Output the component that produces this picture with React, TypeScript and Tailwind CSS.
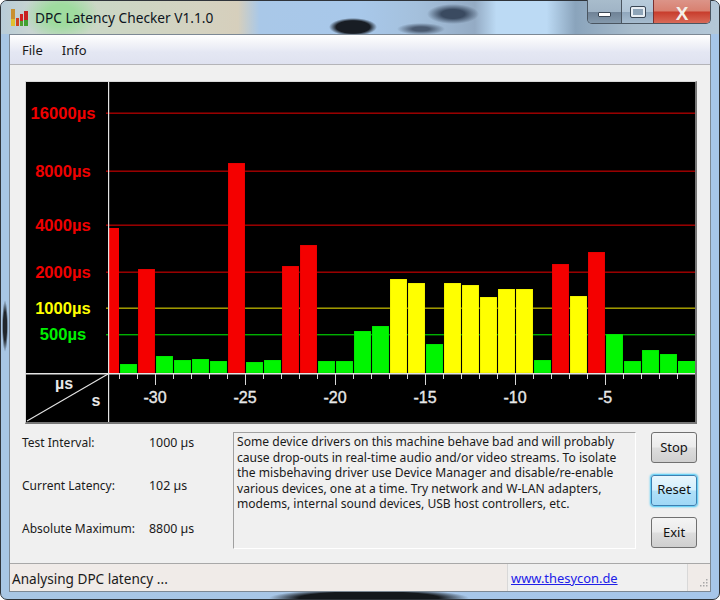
const bars: [number, number, string][] = [
  [120, 364, "g"], [138, 269, "r"], [156, 356, "g"], [174, 360, "g"], [192, 359, "g"], [210, 361, "g"],
  [228, 163, "r"], [246, 362, "g"], [264, 360, "g"], [282, 266, "r"], [300, 245, "r"], [318, 361, "g"],
  [336, 361, "g"], [354, 331, "g"], [372, 326, "g"], [390, 279, "y"], [408, 283, "y"], [426, 344, "g"],
  [444, 283, "y"], [462, 285, "y"], [480, 297, "y"], [498, 289, "y"], [516, 289, "y"], [534, 360, "g"],
  [552, 264, "r"], [570, 296, "y"], [588, 252, "r"], [606, 334, "g"], [624, 361, "g"], [642, 350, "g"],
  [660, 354, "g"],
];
const fills: Record<string, string> = { r: "#f40000", y: "#ffff00", g: "#00f500" };
const lines: [number, string][] = [[113, "#a80000"], [171, "#a80000"], [225, "#a80000"], [272, "#a80000"], [308, "#b0a800"], [334.5, "#00b000"]];
const labels: [string, number, string][] = [
  ["16000µs", 119, "#f00000"], ["8000µs", 177, "#f00000"], ["4000µs", 231, "#f00000"],
  ["2000µs", 278, "#f00000"], ["1000µs", 314, "#ffff00"], ["500µs", 340, "#00f000"],
];
const ticks = Array.from({ length: 32 }, (_, i) => 119 + i * 18);

function Chart() {
  return (
    <svg width="669" height="340" viewBox="26 82 669 340" className="block">
      <rect x="26" y="82" width="669" height="340" fill="#000" />
      {lines.map(([y, c]) => <rect key={y} x="106" y={y - 0.5} width="589" height="1.4" fill={c} />)}
      <rect x="108" y="228" width="11" height="145" fill={fills.r} />
      {bars.map(([x, top, k]) => (
        <rect key={x} x={x} y={top} width="17" height={373 - top} fill={fills[k]} stroke="#000" strokeOpacity="0.18" strokeWidth="0.6" />
      ))}
      <rect x="678" y="361" width="17" height="12" fill={fills.g} />
      <rect x="26" y="373" width="669" height="1.5" fill="#e4e4e4" />
      <rect x="108" y="82" width="1.2" height="340" fill="#e4e4e4" />
      <line x1="27" y1="421" x2="108" y2="374" stroke="#e4e4e4" strokeWidth="1.1" />
      {ticks.map((x) => (
        <rect key={x} x={x} y="374" width="1" height={(x - 155) % 90 === 0 ? 11 : 5} fill="#d8d8d8" />
      ))}
      {labels.map(([t, y, c]) => (
        <text key={t} x="63" y={y} textAnchor="middle" fill={c} className="font-['Liberation_Sans'] font-bold text-[16.6px]">{t}</text>
      ))}
      <text x="64" y="389" textAnchor="middle" fill="#e8e8e8" className="font-['Liberation_Sans'] font-bold text-[16px]">µs</text>
      <text x="96" y="406" textAnchor="middle" fill="#e8e8e8" className="font-['Liberation_Sans'] font-bold text-[16px]">s</text>
      {[["-30", 155], ["-25", 245], ["-20", 335], ["-15", 425], ["-10", 515], ["-5", 605]].map(([t, x]) => (
        <text key={t} x={x} y="403" textAnchor="middle" fill="#e8e8e8" stroke="#e8e8e8" strokeWidth="0.35" className="font-['Liberation_Sans'] text-[16px]">{t}</text>
      ))}
    </svg>
  );
}

function Stat({ label, value }: { label: string; value: string }) {
  return (
    <div className="flex h-[18px] items-center">
      <span className="w-[127px] whitespace-nowrap">{label}</span>
      <span className="whitespace-nowrap text-[12.4px]">{value}</span>
    </div>
  );
}

function Btn({ children, focus }: { children: string; focus?: boolean }) {
  return (
    <button
      className={
        focus
          ? "h-[31px] w-[46px] rounded-[3px] border border-[#3c7fb1] bg-[linear-gradient(#e8f6fd_0%,#d3effd_48%,#b0e0f8_52%,#a0d8f6_100%)] shadow-[0_0_2px_1px_#40c8f8] text-[#111]"
          : "h-[31px] w-[46px] rounded-[3px] border border-[#707070] bg-[linear-gradient(#f4f4f4_0%,#ebebeb_48%,#dddddd_52%,#cfcfcf_100%)] text-[#111]"
      }
    >
      {children}
    </button>
  );
}

export default function App() {
  return (
    <div className="h-[600px] w-[720px] bg-white font-['Noto_Sans','Liberation_Sans',sans-serif] text-[12px] leading-[15.6px] text-[#1a1a1a]">
      <div className="flex h-full flex-col rounded-[7px] border border-[#2f343a] bg-[radial-gradient(ellipse_100px_9px_at_368px_597px,#14181c_70%,transparent_100%),radial-gradient(ellipse_3px_26px_at_4px_325px,#20262c_55%,transparent_100%),linear-gradient(90deg,#a8c6e4_0%,#a6c6ea_100%)] pb-[7px]">
        <div className="relative flex h-[33px] shrink-0 items-center rounded-t-[6px] bg-[radial-gradient(ellipse_24px_9px_at_352px_26px,#181d24_70%,transparent_100%),radial-gradient(ellipse_26px_10px_at_452px_13px,#3a4a60_45%,transparent_100%),radial-gradient(ellipse_24px_6px_at_420px_28px,#4a5a70_35%,transparent_100%),radial-gradient(ellipse_38px_26px_at_60px_14px,#9fdc9f_40%,transparent_100%),linear-gradient(90deg,#b8ccd8_0%,#c8d4d2_4%,#cad8c6_12%,#d4d2c0_28%,#d6cfbc_33%,#a9c8e8_36%,#a8c8ea_50%,#a4c0dc_58%,#94abc4_66%,#bcdaf4_69%,#bcdaf4_76%,#8aa4bc_80%,#a8bccc_88%,#b4c8d8_100%)] pl-[10px]">
          <svg width="18" height="19" viewBox="0 0 18 19" className="shrink-0">
            <rect x="0" y="1" width="4" height="17" fill="#c89030" />
            <rect x="0" y="11" width="4" height="7" fill="#e0c030" />
            <rect x="5" y="10" width="3" height="8" fill="#d04020" />
            <rect x="9" y="6" width="3" height="12" fill="#d02020" />
            <rect x="9" y="13" width="3" height="5" fill="#50a030" />
            <rect x="13" y="3" width="4" height="15" fill="#c82020" />
            <rect x="13" y="12" width="4" height="6" fill="#40a030" />
          </svg>
          <span className="ml-[6px] whitespace-nowrap pt-[1px] text-[13.7px] text-[#0c1420]">DPC Latency Checker V1.1.0</span>
          <div className="absolute top-[-1px] right-[8px] flex h-[24px] overflow-hidden rounded-b-[5px] border border-t-0 border-[#4a5560]">
            <div className="flex w-[33px] items-end justify-center bg-[linear-gradient(#a8bccc_0%,#a0b4c6_50%,#6f8296_52%,#8499ac_100%)] pb-[6px]">
              <div className="h-[5px] w-[13px] rounded-[1px] border border-[#3a4654] bg-white" />
            </div>
            <div className="flex w-[32px] items-center justify-center border-l border-[#4a5560] bg-[linear-gradient(#b8ccdc_0%,#b0c4d6_50%,#8fa6bc_52%,#a6bccf_100%)]">
              <div className="h-[10px] w-[14px] rounded-[1px] border-2 border-[#e8eef4] bg-[#8ea4b8] outline outline-[#3a4654]" />
            </div>
            <div className="flex w-[57px] items-center justify-center border-l border-[#7a3030] bg-[linear-gradient(#dc9488_0%,#d88070_48%,#c83c2c_52%,#d86a58_100%)] pt-[3px]">
              <span className="font-['Liberation_Sans'] text-[19px] leading-none font-bold text-[#f4f0ea]">X</span>
            </div>
          </div>
        </div>
        <div className="mx-[8px] flex min-h-0 flex-1 flex-col border border-[#7c8894] bg-[#f0f0f0]">
          <div className="flex h-[30px] shrink-0 items-center gap-[19px] border-b border-[#b4b4b8] bg-[linear-gradient(#ffffff_0%,#f4f5f9_25%,#e4e7f3_60%,#dfe2f0_100%)] pt-[3px] pl-[12px] text-[13px]">
            <span>File</span>
            <span>Info</span>
          </div>
          <div className="flex flex-1 flex-col px-[15px] pt-[16px]">
            <div className="self-start border-t-[1px] border-r-[2px] border-b-[2px] border-l-[1px] border-t-[#d8d8d8] border-r-[#777] border-b-[#777] border-l-[#d8d8d8]">
              <Chart />
            </div>
            <div className="mt-[8px] flex">
              <div className="-ml-[3px] flex w-[211px] shrink-0 flex-col gap-[25px] pt-[2px]">
                <Stat label="Test Interval:" value="1000 µs" />
                <Stat label="Current Latency:" value="102 µs" />
                <Stat label="Absolute Maximum:" value="8800 µs" />
              </div>
              <div className="h-[117px] w-[403px] shrink-0 border border-r-white border-b-white border-t-[#a0a0a0] border-l-[#a0a0a0] pt-[1px] pl-[3px] text-[12.1px] whitespace-nowrap">
                Some device drivers on this machine behave bad and will probably<br />
                cause drop-outs in real-time audio and/or video streams. To isolate<br />
                the misbehaving driver use Device Manager and disable/re-enable<br />
                various devices, one at a time. Try network and W-LAN adapters,<br />
                modems, internal sound devices, USB host controllers, etc.
              </div>
              <div className="ml-[15px] flex flex-col gap-[11.5px] text-[13px]">
                <Btn>Stop</Btn>
                <Btn focus>Reset</Btn>
                <Btn>Exit</Btn>
              </div>
            </div>
          </div>
          <div className="flex h-[28px] shrink-0 items-center border-t border-[#a8a8a8] bg-[#f0ebe8] text-[13.6px]">
            <span className="w-[497px] pt-[2px] pl-[2px]">Analysing DPC latency ...</span>
            <div className="flex h-full w-[181px] items-center border-x border-[#d8d8d8] bg-[#f0f0f0] pt-[2px] pl-[3px]">
              <a className="text-[12.9px] text-[#2020e8] underline">www.thesycon.de</a>
            </div>
            <div className="flex h-full flex-1 items-end justify-end pr-[2px] pb-[2px]">
              <svg width="10" height="10" viewBox="0 0 10 10">
                {[[8, 0], [8, 3], [5, 3], [8, 6], [5, 6], [2, 6]].map(([x, y]) => (
                  <rect key={`${x}-${y}`} x={x} y={y} width="1.5" height="1.5" fill="#a8a8a8" />
                ))}
              </svg>
            </div>
          </div>
        </div>
      </div>
    </div>
  );
}
